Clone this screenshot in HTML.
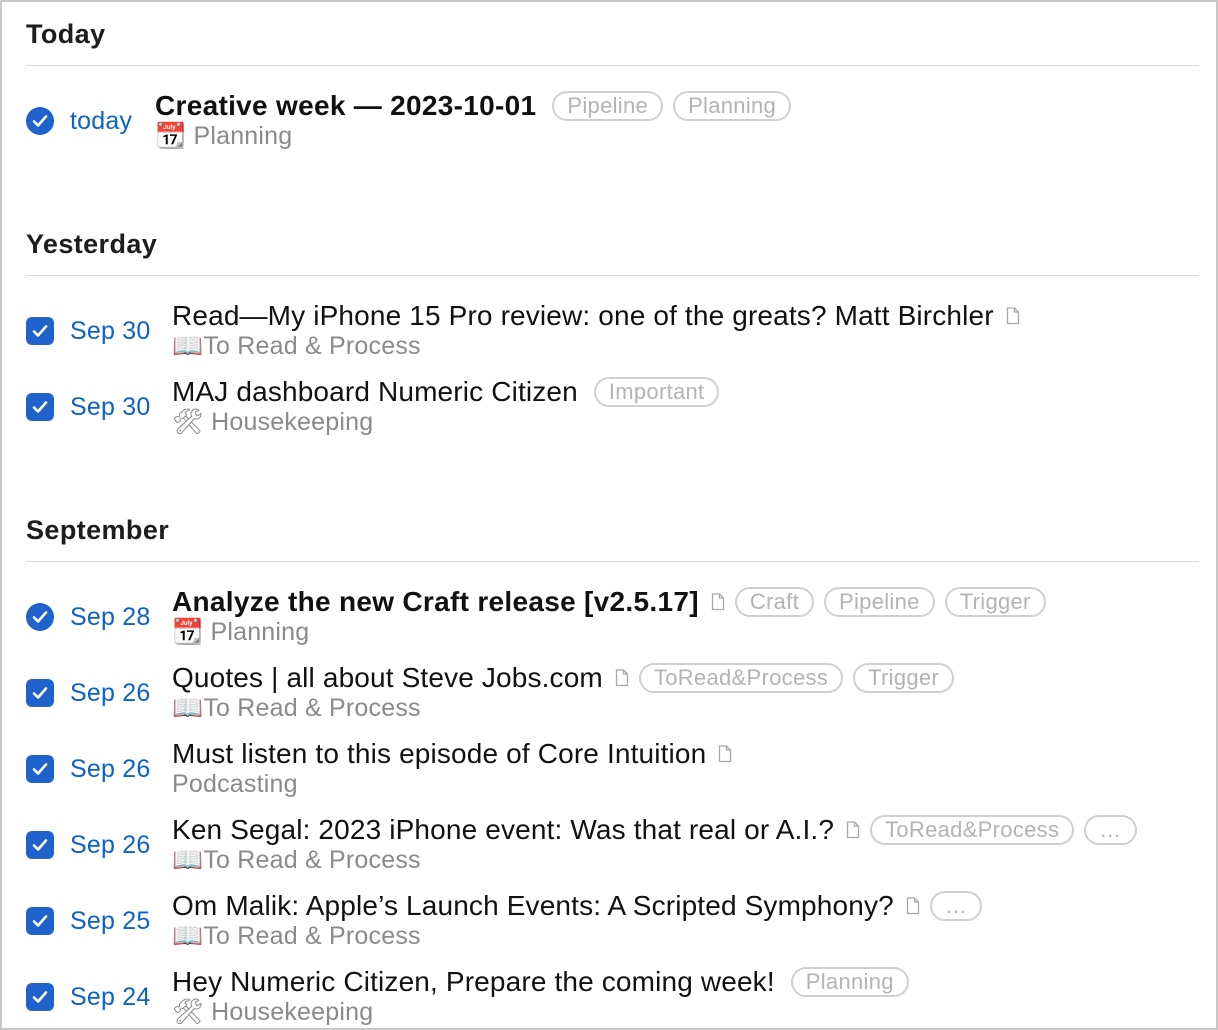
<!DOCTYPE html>
<html><head><meta charset="utf-8"><style>
*{margin:0;padding:0;box-sizing:border-box}
body{width:1218px;height:1030px;background:#fff;font-family:"Liberation Sans",sans-serif;position:relative;overflow:hidden}
.frame{position:absolute;left:0;top:0;width:1218px;height:1030px;border:2px solid #c8c8c8}
.h{position:absolute;left:26px;font-weight:bold;font-size:27px;letter-spacing:0.4px;color:#1d1d1f;line-height:30px}
.hr{position:absolute;left:26px;width:1173px;height:1px;background:#dcdcdc}
.row{position:absolute;left:0;width:1200px;height:60px}
.ic{position:absolute;left:26px;top:16px;width:28px;height:28px;background:#1f62cc;border-radius:6px}
.ic.c{border-radius:50%}
.ic svg{position:absolute;left:0;top:0}
.dt{position:absolute;left:70px;top:15px;font-size:25px;color:#0d62c6;line-height:30px;letter-spacing:0.2px}
.t{position:absolute;top:0;white-space:nowrap;font-size:28px;letter-spacing:0.15px;color:#111;line-height:30px;display:flex;align-items:center}
.t.b{font-weight:bold;letter-spacing:0.3px}
.s{position:absolute;top:30px;white-space:nowrap;font-size:25px;letter-spacing:0.2px;color:#8a8a8a;line-height:30px}
.tag{display:inline-block;border:2px solid #d0d0d0;border-radius:16px;font-size:22px;font-weight:normal;letter-spacing:0.3px;color:#b3b3b3;line-height:26px;padding:0 13px;margin-left:10px;height:30px}
.doc{display:inline-block;width:14px;height:18px;margin-left:12px;position:relative}
</style></head><body>
<div class="frame"></div>
<svg width="0" height="0" style="position:absolute"><defs>
<symbol id="chk" viewBox="0 0 28 28"><path d="M8 14.5l4 4 8-9" fill="none" stroke="#fff" stroke-width="2.6" stroke-linecap="round" stroke-linejoin="round"/></symbol>
<symbol id="doc" viewBox="0 0 14 18"><path d="M1.5 1h7l4 4v11.5h-11z M8.5 1v4h4" fill="none" stroke="#a8a8a8" stroke-width="1.3"/></symbol>
</defs></svg>

<div class="h" style="top:19px">Today</div>
<div class="hr" style="top:65px"></div>
<div class="row" style="top:91px"><div class="ic c"><svg width="28" height="28"><use href="#chk"/></svg></div><div class="dt">today</div>
<div class="t b" style="left:155px">Creative week — 2023-10-01<span class="tag" style="margin-left:16px">Pipeline</span><span class="tag">Planning</span></div>
<div class="s" style="left:155px">📆 Planning</div></div>

<div class="h" style="top:229px">Yesterday</div>
<div class="hr" style="top:275px"></div>
<div class="row" style="top:301px"><div class="ic"><svg width="28" height="28"><use href="#chk"/></svg></div><div class="dt">Sep 30</div>
<div class="t" style="left:172px">Read—My iPhone 15 Pro review: one of the greats? Matt Birchler<svg class="doc" width="14" height="18"><use href="#doc"/></svg></div>
<div class="s" style="left:172px">📖To Read &amp; Process</div></div>
<div class="row" style="top:377px"><div class="ic"><svg width="28" height="28"><use href="#chk"/></svg></div><div class="dt">Sep 30</div>
<div class="t" style="left:172px">MAJ dashboard Numeric Citizen<span class="tag" style="margin-left:16px">Important</span></div>
<div class="s" style="left:172px">🛠 Housekeeping</div></div>

<div class="h" style="top:515px">September</div>
<div class="hr" style="top:561px"></div>
<div class="row" style="top:587px"><div class="ic c"><svg width="28" height="28"><use href="#chk"/></svg></div><div class="dt">Sep 28</div>
<div class="t b" style="left:172px">Analyze the new Craft release [v2.5.17]<svg class="doc" width="14" height="18"><use href="#doc"/></svg><span class="tag">Craft</span><span class="tag">Pipeline</span><span class="tag">Trigger</span></div>
<div class="s" style="left:172px">📆 Planning</div></div>
<div class="row" style="top:663px"><div class="ic"><svg width="28" height="28"><use href="#chk"/></svg></div><div class="dt">Sep 26</div>
<div class="t" style="left:172px">Quotes | all about Steve Jobs.com<svg class="doc" width="14" height="18"><use href="#doc"/></svg><span class="tag">ToRead&amp;Process</span><span class="tag">Trigger</span></div>
<div class="s" style="left:172px">📖To Read &amp; Process</div></div>
<div class="row" style="top:739px"><div class="ic"><svg width="28" height="28"><use href="#chk"/></svg></div><div class="dt">Sep 26</div>
<div class="t" style="left:172px">Must listen to this episode of Core Intuition<svg class="doc" width="14" height="18"><use href="#doc"/></svg></div>
<div class="s" style="left:172px">Podcasting</div></div>
<div class="row" style="top:815px"><div class="ic"><svg width="28" height="28"><use href="#chk"/></svg></div><div class="dt">Sep 26</div>
<div class="t" style="left:172px">Ken Segal: 2023 iPhone event: Was that real or A.I.?<svg class="doc" width="14" height="18"><use href="#doc"/></svg><span class="tag">ToRead&amp;Process</span><span class="tag">…</span></div>
<div class="s" style="left:172px">📖To Read &amp; Process</div></div>
<div class="row" style="top:891px"><div class="ic"><svg width="28" height="28"><use href="#chk"/></svg></div><div class="dt">Sep 25</div>
<div class="t" style="left:172px">Om Malik: Apple’s Launch Events: A Scripted Symphony?<svg class="doc" width="14" height="18"><use href="#doc"/></svg><span class="tag">…</span></div>
<div class="s" style="left:172px">📖To Read &amp; Process</div></div>
<div class="row" style="top:967px"><div class="ic"><svg width="28" height="28"><use href="#chk"/></svg></div><div class="dt">Sep 24</div>
<div class="t" style="left:172px">Hey Numeric Citizen, Prepare the coming week!<span class="tag" style="margin-left:16px">Planning</span></div>
<div class="s" style="left:172px">🛠 Housekeeping</div></div>
</body></html>
